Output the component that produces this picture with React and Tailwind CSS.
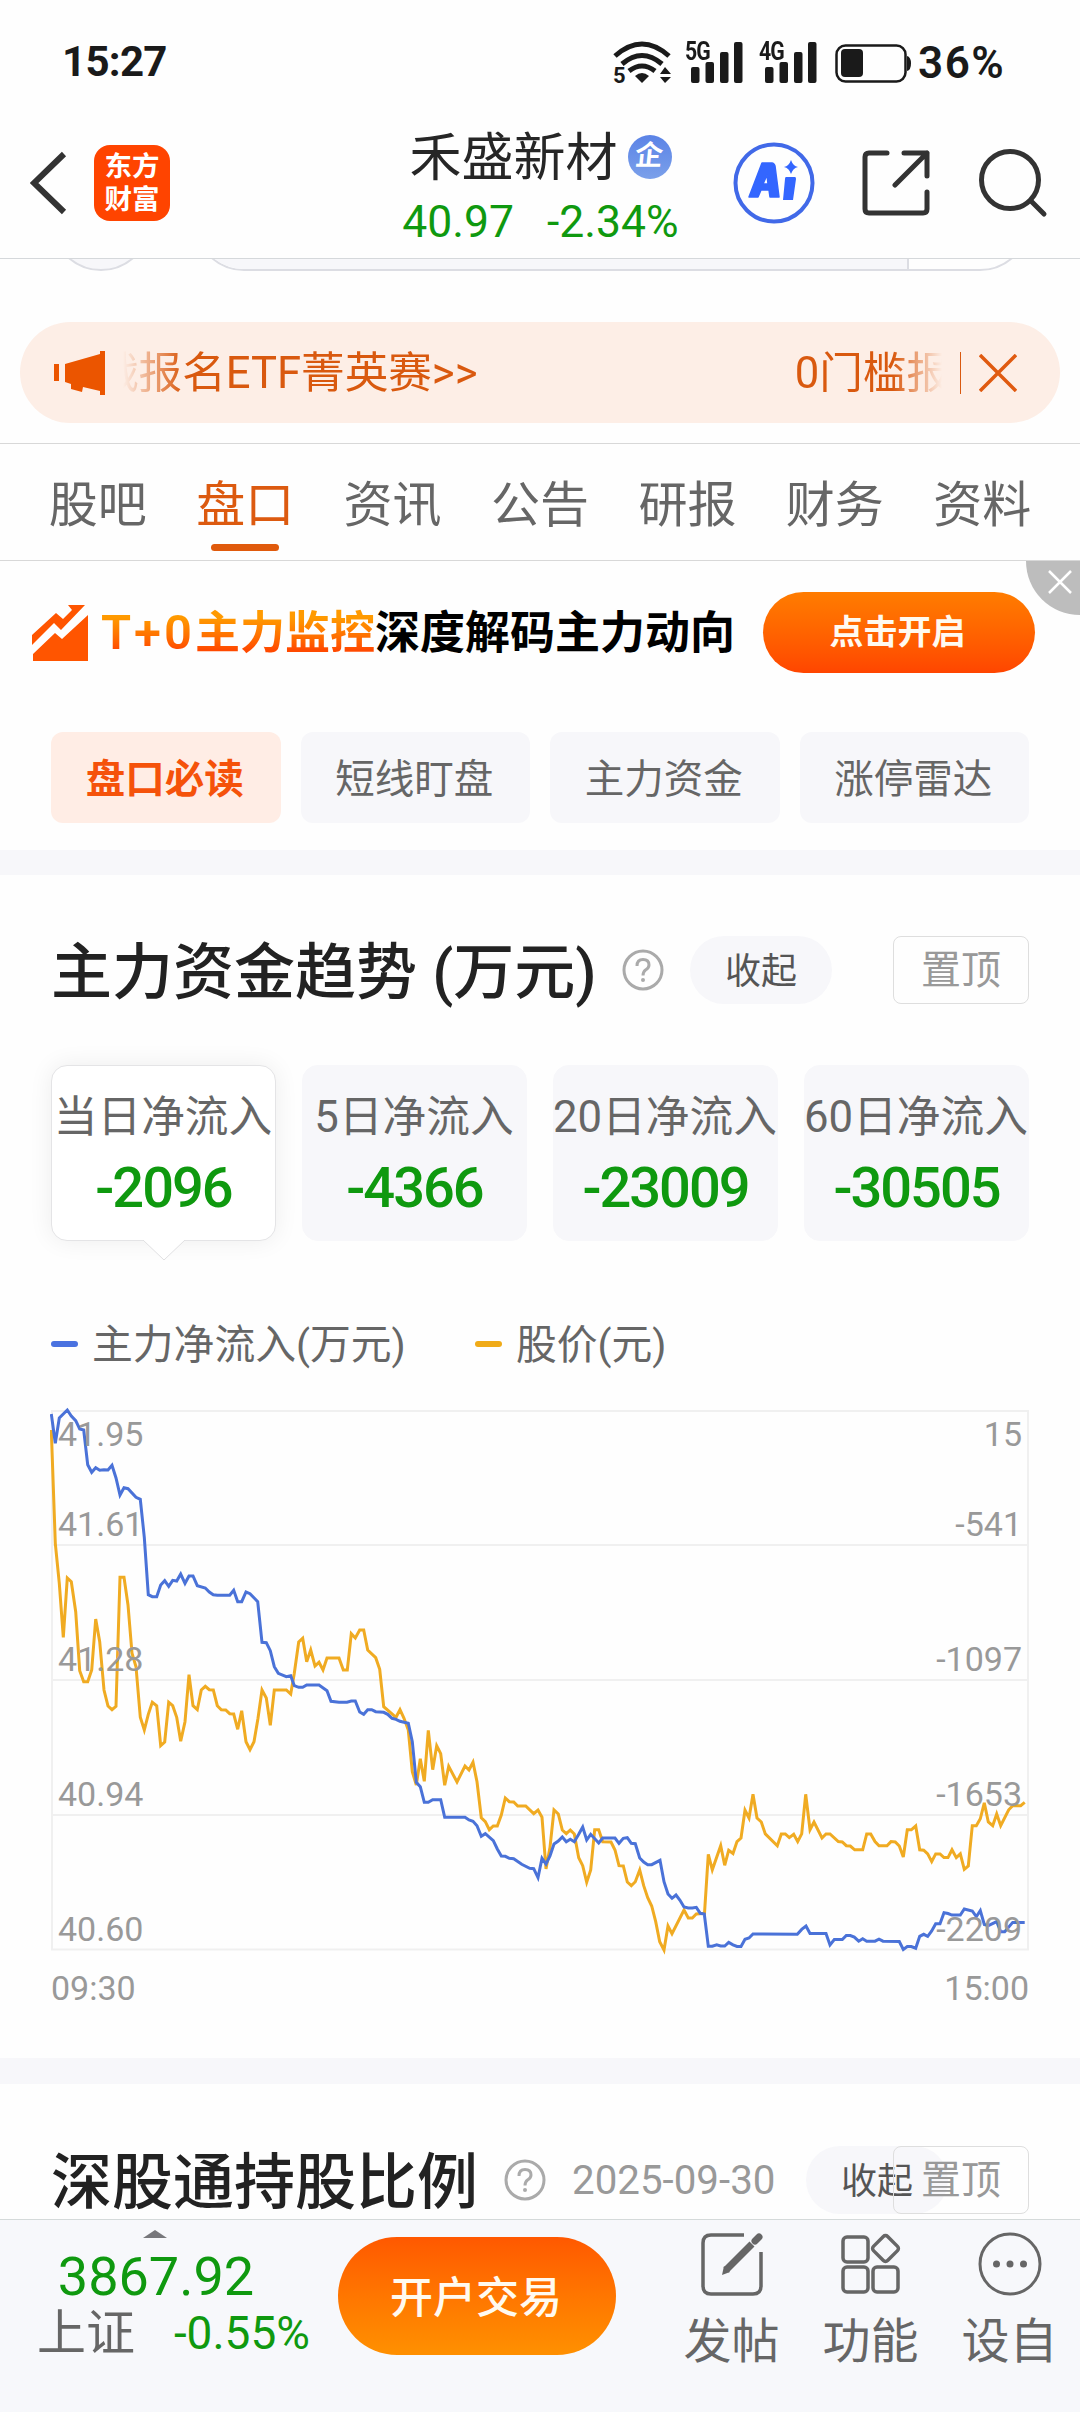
import clsx from 'clsx';

const FLOW = '1.3,14 5.3,43.3 9.3,18 17.3,10 21.3,16 25.7,20.7 29.7,29 33.7,30 37.7,64.7 41.7,72.3 45.7,67.7 49.7,70.3 54,69.7 58,70 62,65.3 66,78 70,95 74,87.7 78,88.7 86,97.3 90.3,99.3 94.3,137.3 98.3,194.7 102.3,196.7 106.7,196.7 110.7,185 114.7,180.7 118.7,186.3 122.7,180.3 126.7,181 130.7,174 135,183.3 139,176 143,176 147.3,185.7 155.3,188 159.3,192 163.3,194.7 167.3,195.3 179.7,195.3 183.7,190.3 187.7,201.7 191.7,201.7 196,192 200,193.7 207.7,201.7 212,242.3 216.3,242.7 220.3,250.7 224.3,266.7 228.3,273.3 236.3,276.7 240.7,275.7 244.3,285.7 248.7,287.3 252.7,287.3 256.7,285 269,285 277,290.7 281,301.3 289,302.3 297,302.3 301.3,301 305.3,301 309.7,312 313.7,314.3 317.7,309.7 321.7,309.7 325.7,311.7 333.7,312.3 337.7,314.3 342,318.3 346,319.3 350,321.3 358.3,323.3 362.3,341.7 366.3,382.3 370.3,386.7 374.3,402.3 378.3,402.3 382.7,399.7 390.7,399.7 394.7,417.3 415,417.3 419,420 423,421.3 427,425.7 431.3,436.3 435.3,433.7 443.3,440.7 447.3,449 451.3,456 455.3,456.3 459.3,458.3 463.7,458.7 471.7,464.3 479.7,468.3 483.7,468.7 488,477.7 492,458.3 496,464 500,456 504,444 508.3,441 512.3,437 516.3,441.7 520.3,439.3 524.3,441.7 528.7,434.3 532.7,427 536.7,440 540.7,434.3 548.7,443 552.7,438 565,438 569,443.3 573.3,438.3 577.3,437.7 581.3,443.3 585.3,443.7 589.7,458 593.7,462 597.7,464.7 601.7,464.7 610,460.3 614,481.7 618,494 622,498.3 626,495 630,500.3 634,507 638.3,508 642.3,508 646.3,507.3 650.3,513.3 654.3,514 658.3,546.2 662.3,546.2 666.7,544.8 670.7,546 674.7,546 678.7,542.4 683,544.9 687,546.5 691,546.5 695,539.2 699,538 703,533.9 747.3,534.3 751.7,529.4 756,526.1 760,533.5 776,533.5 780,544.9 784.3,539.6 792.3,539.6 796.3,535.5 800.3,535.5 804.3,537.1 808.7,541.2 812.7,538.8 816.7,541.2 825,541.2 829,539.2 833,541.2 849.3,541.6 853.3,549.4 857.3,546.5 861.3,546.5 865.7,548.2 869.7,536.3 873.7,534.3 877.7,536.3 881.7,531 885.7,523.7 890,523.7 894,512.7 898,513.5 902,515.1 910.3,515.1 914.3,509 922.3,511 926.3,516.7 930.3,510.6 934.3,524.5 938.3,525.7 946.7,521.6 950.7,531.8 954.7,531.8 962.7,522.4 974.7,522.4';

const PRICE = '1.3,30 5.3,143.3 9.3,183.3 13.3,237.3 17.3,178 21.3,181.7 25.7,211.7 29.7,270.7 33.7,281.7 37.7,281.7 41.7,270 45.7,219 49.7,241.7 54,290 58,306 62,309.7 66,306.3 70,177.3 74,177.3 78,205 82,253.3 86,266.7 90.3,317.3 94.3,330 98.3,314.3 102.3,302.3 106.7,305.7 110.7,345.7 114.7,342 118.7,302.3 122.7,305.7 126.7,317.3 130.7,341.3 135,321.7 139,274.7 143,305.7 147.3,309.7 151.3,290 155.3,286.3 159.3,289.7 163.3,290 167.3,305.7 171.3,309.7 175.7,310 179.7,313.7 183.7,314 187.7,329.3 191.7,310.7 196,341.7 200,349.7 204,341.7 208,318.3 212,290 216.3,298 220.3,325.3 224.3,290 236.3,290 240.7,294 244.3,273.3 248.7,242 252.7,238.3 256.7,261.7 260.7,250 265,266 269,262.3 273,270 277,258 289,258 293.3,270 297.3,270 301.3,233.7 305.3,238 309.7,230 313.7,230 317.7,250 325.7,257.7 329.7,269.3 333.7,306.7 346,317.3 350,309.7 354,318.3 358.3,330 362.3,371.7 366.3,385 370.3,358.7 374.3,381.3 378.3,330.3 382.7,369.7 386.7,345.7 390.7,353.7 394.7,385.3 398.7,366.3 407,382 415,366 419,370 423,362.3 427,381.7 431.3,417.7 435.3,421.7 439.3,429.7 443.3,426 447.3,426 451.3,415 455.3,398 459.3,401.7 463.7,402 467.7,406 475.7,406 483.7,413.7 488,410 492,417.3 496,469 500,447.3 504,410 508.3,414 512.3,430 516.3,433.7 520.3,430 524.3,434 528.7,457.7 532.7,465.7 536.7,482.3 540.7,470 544.7,429.7 548.7,429.7 552.7,441.7 561,442 565,450 569,465.7 573.3,466 577.3,482 581.3,485.7 585.3,481.7 589.7,470 593.7,485.7 597.7,497.7 601.7,506 605.7,521.7 609.7,541.7 614,550 618,526 622,533.7 634,510 638.3,518 642.3,518 646.3,514 654.5,513.3 658.3,454.3 662.3,469.8 670.7,445.7 674.7,465.3 678.7,450.2 683,453.5 687,441.6 691,438 695,410.2 699,418 703,394.3 707,418 711.3,422 715.3,433.9 727.3,445.7 731.3,433.9 735.3,433.9 739.3,437.6 743.7,434.3 747.7,441.6 751.7,433.9 755.7,394.3 760,429.8 764,422 772,438 776,433.9 780,433.9 788.3,441.6 792.3,442 796.3,445.7 800.3,446 804.7,449.8 812.7,449.8 816.7,433.9 820.7,433.9 825,441.6 829,445.7 837,445.7 841,441.6 845.3,442 849.3,446 853.3,457 857.3,429.8 861.3,429.8 865.7,426 869.7,449.8 873.7,450.2 877.7,453.9 881.7,461.6 885.7,453.9 890,453.9 894,457.6 898,457.6 902,449.8 906.3,457.6 910.3,453.9 914.3,469.4 918.3,466 922.3,425.7 926.3,425.7 930.3,418.8 934.3,402.9 938.3,422 942.7,425.7 946.7,413.9 950.7,425.7 958.7,409.8 962.7,405.7 970.7,405.7 974.7,402.4';

const tabs = ['股吧', '盘口', '资讯', '公告', '研报', '财务', '资料'];
const chips = ['盘口必读', '短线盯盘', '主力资金', '涨停雷达'];
const cards = [
  { label: '当日净流入', value: '-2096' },
  { label: '5日净流入', value: '-4366' },
  { label: '20日净流入', value: '-23009' },
  { label: '60日净流入', value: '-30505' },
];
const axis = [
  { y: 46, left: '41.95', right: '15' },
  { y: 136, left: '41.61', right: '-541' },
  { y: 271, left: '41.28', right: '-1097' },
  { y: 406, left: '40.94', right: '-1653' },
  { y: 541, left: '40.60', right: '-2209' },
];

function Signal({ label }) {
  return (
    <div className="relative w-[58px] h-[44px]">
      <span className="absolute left-0 -top-[4px] text-[25px] leading-[30px] font-bold tracking-[-1px] origin-left scale-x-85">{label}</span>
      <svg width="58" height="44" viewBox="0 0 58 44" fill="#1a1a1a">
        <rect x="6" y="26" width="8.500" height="16" rx="2" />
        <rect x="20.500" y="21" width="8.500" height="21" rx="2" />
        <rect x="35" y="11" width="8.500" height="31" rx="2" />
        <rect x="49" y="1" width="8.500" height="41" rx="2" />
      </svg>
    </div>
  );
}

function StatusBar() {
  return (
    <div className="h-[110px] flex items-start pl-[62px] pr-[73px] pt-[41px] text-[#1a1a1a]">
      <span className="text-[42px] leading-[44px] font-bold tracking-[-0.700px] -mt-px">15:27</span>
      <div className="ml-auto flex items-start">
        <div className="relative w-[58px] h-[44px]">
          <svg width="58" height="44" viewBox="0 0 58 44" fill="none" stroke="#1a1a1a" strokeWidth="5">
            <path d="M2 15 Q29 -9 56 15" />
            <path d="M9 23 Q29 6 49 23" />
            <path d="M16 30 Q29 20 42 30" />
            <path d="M22 35 Q29 29 36 35 L29 42 Z" fill="#1a1a1a" stroke="none" />
            <path d="M47 33 L52 26 L58 33 Z M47 36 L52 42 L58 36 Z" fill="#1a1a1a" stroke="none" />
          </svg>
          <span className="absolute left-0 top-[23px] text-[22px] leading-[24px] font-bold">5</span>
        </div>
        <div className="ml-[14px]"><Signal label="5G" /></div>
        <div className="ml-[16px]"><Signal label="4G" /></div>
        <svg className="ml-[18px] mt-[2px]" width="77" height="42" viewBox="0 0 77 42">
          <rect x="1.500" y="2.500" width="69" height="36" rx="9" fill="none" stroke="#1a1a1a" strokeWidth="2.500" />
          <rect x="6" y="6" width="22" height="28" rx="4" fill="#1a1a1a" />
          <path d="M72 13 q4 1 4 7.500 t-4 7.500 z" fill="#1a1a1a" />
        </svg>
        <span className="ml-[6px] w-[89px] text-[44px] leading-[44px] font-semibold tracking-[1.500px]">36%</span>
      </div>
    </div>
  );
}

function NavBar() {
  return (
    <div className="h-[149px] flex items-start border-b border-[#d5d8db] text-[#262626]">
      <svg className="ml-[30px] mt-[40px]" width="38" height="66" viewBox="0 0 38 66" fill="none" stroke="#333" strokeWidth="6">
        <path d="M34 4 L4 33 L34 62" />
      </svg>
      <div className="ml-[26px] mt-[35px] w-[76px] h-[76px] rounded-2xl bg-[#ff4400] text-white text-[27.500px] leading-[33px] font-bold text-center pt-[5px]">
        东方<br />财富
      </div>
      <div className="ml-[225px] mt-[21px] w-[294px] flex flex-col items-center">
        <div className="flex items-center -ml-[3px]">
          <span className="text-[52px] leading-[52px] pt-[2px] -mb-[2px]">禾盛新材</span>
          <span className="ml-[10px] w-[44px] h-[44px] rounded-full bg-linear-to-b from-[#5b83e6] to-[#7ba0ea] text-white text-[28px] leading-[42px] font-bold text-center">
            <span className="inline-block -skew-x-6">企</span>
          </span>
        </div>
        <div className="mt-[14px] -ml-[3px] flex gap-[33px] text-[44.500px] leading-[50px] text-[#0f990f]">
          <span>40.97</span>
          <span>-2.34%</span>
        </div>
      </div>
      <svg className="ml-[44px] mt-[32px]" width="82" height="82" viewBox="0 0 82 82">
        <circle cx="41" cy="41" r="38.500" fill="none" stroke="#4169e8" strokeWidth="4" />
        <path fillRule="evenodd" fill="#3366ff" stroke="#3366ff" strokeWidth="1.500" strokeLinejoin="round" d="M29 21 H39 Q41 21 42 24 L46 55 H37 L36 48 H28 L25 55 H16 Z M34 33 L30 42 H35 Z" />
        <path fill="#3366ff" d="M53 35 H62 Q63 35 63 37 L60 58 H50 L52 37 Q52 35 53 35 Z M58 18 Q60 24 65 25 Q60 26 58 32 Q56 26 51 25 Q56 24 58 18 Z" />
      </svg>
      <svg className="ml-[47px] mt-[39px]" width="68" height="68" viewBox="0 0 68 68" fill="none" stroke="#333" strokeWidth="5" strokeLinecap="round" strokeLinejoin="round">
        <path d="M25 4 H7 Q3 4 3 8 V60 Q3 64 7 64 H61 Q65 64 65 60 V43" />
        <path d="M42 4 H65 V27 M65 4 L33 36" />
      </svg>
      <svg className="ml-[49px] mt-[37px]" width="70" height="72" viewBox="0 0 70 72" fill="none" stroke="#333" strokeWidth="5" strokeLinecap="round">
        <circle cx="31" cy="33" r="28.500" />
        <path d="M52 54 L65 67" />
      </svg>
    </div>
  );
}

// bottom edge of the row that has scrolled under the header
function ScrolledRow() {
  return (
    <div className="h-[12px] overflow-hidden flex items-end">
      <div className="ml-[51px] w-[100px] h-[100px] shrink-0 rounded-full bg-[#f7f7fa] border-2 border-[#dcdde3]" />
      <div className="ml-[43px] w-[836px] h-[100px] shrink-0 rounded-full border-2 border-[#dcdde3] overflow-hidden flex">
        <div className="w-[713px] bg-[#f7f7fa] border-r-2 border-[#dcdde3]" />
      </div>
    </div>
  );
}

function Notice() {
  return (
    <div className="mt-[51px] mx-5 h-[101px] rounded-full bg-[#fdeee6] flex items-center text-[#d9590f]">
      <svg className="ml-[34px] shrink-0" width="52" height="46" viewBox="0 0 52 46" fill="#eb5500">
        <path d="M0 14 h5 v17 H0 Z M11 14 L46 4 V1 H51 V45 H46 V41 L29 37 L28 42 L17 39 V34 L11 32 Z" />
      </svg>
      <div className="ml-[17px] mt-[2px] w-[819px] overflow-hidden flex justify-between whitespace-nowrap text-[43.600px] leading-[60px] [mask-image:linear-gradient(to_right,transparent,black_60px,black_770px,transparent)]">
        <span className="-ml-[28px]">战报名ETF菁英赛&gt;&gt;</span>
        <span className="-mr-[8px]">0门槛报</span>
      </div>
      <div className="ml-[18px] w-px h-[42px] bg-[#d9590f]" />
      <svg className="ml-[18px]" width="38" height="38" viewBox="0 0 38 38" stroke="#e05a10" strokeWidth="3.500">
        <path d="M1 1 L37 37 M37 1 L1 37" />
      </svg>
    </div>
  );
}

function TabBar() {
  return (
    <div className="mt-[20px] h-[118px] border-y border-[#d8d8d8] px-[24px] flex">
      {tabs.map((t, i) => (
        <div key={t} className={clsx('flex-1 flex flex-col items-center', i === 1 ? 'text-[#dc5a10]' : 'text-[#666]')}>
          <span className="mt-[32px] text-[49px] leading-[60px]">{t}</span>
          {i === 1 && <span className="mt-[8px] w-[68px] h-[7px] rounded-full bg-[#e05a0c]" />}
        </div>
      ))}
    </div>
  );
}

function PromoBanner() {
  return (
    <div className="relative h-[142px] flex items-center pl-[32px]">
      <svg width="57" height="57" viewBox="0 0 57 57" fill="#ff5500">
        <path d="M0 31 L24 9 L31 15 L40 6 L36 1 L53 1 L29 26 L22 19 L0 41 Z" />
        <path d="M1 57 V50 L23 29 L30 35 L56 11 V57 Z" />
      </svg>
      <span className="ml-[12px] mt-[3px] whitespace-nowrap text-[45px] leading-[60px] font-bold text-black">
        <span className="bg-linear-to-b from-[#ff9a00] from-20% to-[#ff4a00] to-80% bg-clip-text text-transparent"><span className="text-[49px] font-semibold tracking-[3px]">T+0</span>主力监控</span>深度解码主力动向
      </span>
      <button className="absolute left-[763px] top-[31px] w-[272px] h-[81px] rounded-full bg-linear-to-b from-[#ff7c00] to-[#ff4500] text-[#fffaf0] text-[34px] font-bold pr-[3px]">点击开启</button>
      <div className="absolute right-0 top-0 w-[54px] h-[54px] rounded-bl-full bg-[#bdbdbd]">
        <svg className="mt-[9px] ml-[22px]" width="24" height="24" viewBox="0 0 24 24" stroke="#fff" strokeWidth="2.500">
          <path d="M1 1 L23 23 M23 1 L1 23" />
        </svg>
      </div>
    </div>
  );
}

function Help() {
  return (
    <svg className="shrink-0" width="42" height="42" viewBox="0 0 42 42" fill="none" stroke="#aaa" strokeWidth="3">
      <circle cx="21" cy="21" r="19" />
      <path d="M15 17 Q15 10.500 21 10.500 Q27 10.500 27 16 Q27 19 23.500 21 Q21 23 21 26.500" />
      <circle cx="21" cy="31" r="2" fill="#aaa" stroke="none" />
    </svg>
  );
}

function FoldButton({ className }) {
  return <button className={clsx('shrink-0 w-[142px] h-[68px] rounded-full bg-[#f7f7fa] text-[#555] text-[36px] leading-[68px] pt-[3px] flex items-center justify-center', className)}>收起</button>;
}

function PinButton({ className }) {
  return <button className={clsx('shrink-0 w-[136px] h-[68px] rounded-lg border border-[#dedede] text-[#999] text-[40px] leading-[66px] pt-[2px] flex items-center justify-center', className)}>置顶</button>;
}

function FundCard({ label, value, active }) {
  return (
    <div className={clsx('relative w-[225px] h-[176px] rounded-2xl flex flex-col items-center whitespace-nowrap', active ? 'bg-white border border-[#e4e4e6] shadow-[0_0_24px_rgba(0,0,0,0.07)]' : 'bg-[#f7f7fa] border border-[#f7f7fa]')}>
      <span className="mt-[21px] -ml-px text-[43.700px] leading-[60px] text-[#666]">{label}</span>
      <span className="mt-[11px] text-[56px] leading-[60px] font-medium tracking-[-2px] text-[#0f990f]">{value}</span>
      {active && (
        <svg className="absolute left-[91px] -bottom-[21px]" width="42" height="21" viewBox="0 0 42 21">
          <path d="M0 0 L21 20 L42 0" fill="#fff" stroke="#e0e0e2" strokeWidth="1" />
        </svg>
      )}
    </div>
  );
}

function FundChart() {
  return (
    <svg className="block ml-[50px] mt-[26px]" width="980" height="620" viewBox="0 0 980 620" fill="none">
      <path d="M1 11 H979 M1 145 H979 M1 280 H979 M1 415 H979 M1 549.500 H979 M2 10 V550 M978 10 V550" stroke="#f0f0f0" strokeWidth="2" />
      <polyline points={PRICE} stroke="#f0ab22" strokeWidth="3" />
      <polyline points={FLOW} stroke="#4a72d8" strokeWidth="3" />
      <g fill="#999" fontFamily="Roboto" fontSize="34">
        {axis.map(a => (
          <g key={a.left}>
            <text x="8" y={a.y}>{a.left}</text>
            <text x="972" y={a.y} textAnchor="end">{a.right}</text>
          </g>
        ))}
        <text x="1" y="600">09:30</text>
        <text x="979" y="600" textAnchor="end">15:00</text>
      </g>
    </svg>
  );
}

function BottomItem({ label, children }) {
  return (
    <div className="w-[139px] flex flex-col items-center text-[#666]">
      <div className="h-[64px]">{children}</div>
      <span className="mt-[18px] text-[48px] leading-[56px]">{label}</span>
    </div>
  );
}

function BottomBar() {
  return (
    <div className="h-[193px] shrink-0 border-t border-[#d5dada] bg-[#f7f8fb] flex items-start">
      <div className="w-[312px] shrink-0 flex flex-col items-center">
        <svg className="mt-[10px] mr-[2px]" width="24" height="8" viewBox="0 0 24 8"><path d="M0 8 L12 0 L24 8 Z" fill="#77777b" /></svg>
        <span className="mt-[9px] text-[54px] leading-[60px] text-[#0f990f]">3867.92</span>
        <div className="pl-[37px] pr-[2px] w-full flex items-center leading-[52px]">
          <span className="text-[49px] text-[#666] pt-px">上证</span>
          <span className="ml-auto text-[46px] text-[#0f990f] -mt-[2px]">-0.55%</span>
        </div>
      </div>
      <button className="ml-[26px] mt-[17px] w-[278px] h-[118px] shrink-0 rounded-full bg-linear-to-b from-[#ff5800] to-[#ff9000] text-[#fffaf0] text-[43px] font-medium pt-[5px] pr-[2px]">开户交易</button>
      <div className="ml-[46px] mt-[12px] flex">
        <BottomItem label="发帖">
          <svg width="62" height="64" viewBox="0 0 62 64" fill="none" stroke="#666" strokeWidth="3.500">
            <path d="M43 3 H10 Q2 3 2 11 V54 Q2 62 10 62 H52 Q60 62 60 54 V20" />
            <path d="M51 12 L25 38" strokeWidth="7" />
            <path d="M21 43 L23 34 L29 40 Z" fill="#666" stroke="none" />
            <path d="M54 9 L58 5" strokeWidth="7" strokeLinecap="round" />
          </svg>
        </BottomItem>
        <BottomItem label="功能">
          <svg width="60" height="64" viewBox="0 0 60 64" fill="none" stroke="#666" strokeWidth="3.500">
            <rect x="2" y="5" width="25" height="25" rx="4" />
            <rect x="2" y="35" width="25" height="25" rx="4" />
            <rect x="32" y="35" width="25" height="25" rx="4" />
            <rect x="34.500" y="6.500" width="20" height="20" rx="3" transform="rotate(45 44.500 16.500)" />
          </svg>
        </BottomItem>
        <BottomItem label="设自">
          <svg width="64" height="64" viewBox="0 0 64 64">
            <circle cx="32" cy="32" r="30" fill="none" stroke="#666" strokeWidth="3" />
            <g fill="#666"><circle cx="18.500" cy="32" r="3.500" /><circle cx="32" cy="32" r="3.500" /><circle cx="45.500" cy="32" r="3.500" /></g>
          </svg>
        </BottomItem>
      </div>
    </div>
  );
}

export default function App() {
  return (
    <div className="w-[1080px] h-[2412px] flex flex-col overflow-hidden bg-[#fefefe] font-['Roboto','Noto_Sans_CJK_SC',sans-serif]">
      <div className="flex-1 min-h-0 overflow-hidden">
        <StatusBar />
        <NavBar />
        <ScrolledRow />
        <Notice />
        <TabBar />
        <PromoBanner />

        <div className="mt-[29px] px-[51px] grid grid-cols-4 gap-5">
          {chips.map((c, i) => (
            <div key={c} className={clsx('h-[91px] rounded-xl pt-[3px] pr-[2px] text-[39.500px] leading-[90px] text-center', i === 0 ? 'bg-[#ffede5] text-[#f5520a] font-bold' : 'bg-[#f7f7fa] text-[#666]')}>{c}</div>
          ))}
        </div>
        <div className="mt-[27px] h-[25px] bg-[#f7f7fa]" />

        <div className="mt-[61px] h-[68px] px-[51px] flex items-center">
          <h2 className="mt-[6px] text-[61px] leading-[68px] font-medium text-[#222] whitespace-nowrap w-[571px]">主力资金趋势 (万元)</h2>
          <Help />
          <FoldButton className="ml-[26px]" />
          <PinButton className="ml-auto" />
        </div>

        <div className="mt-[61px] px-[51px] flex justify-between">
          {cards.map((c, i) => <FundCard key={c.label} {...c} active={i === 0} />)}
        </div>

        <div className="mt-[73px] pl-[51px] h-[60px] flex items-center text-[40.800px] leading-[60px] text-[#666]">
          <span className="w-[27px] h-[6px] rounded-full bg-[#4a72e0]" />
          <span className="ml-[14px] mt-[2px] w-[383px]">主力净流入(万元)</span>
          <span className="w-[27px] h-[6px] rounded-full bg-[#f0ab18]" />
          <span className="ml-[14px] mt-[2px]">股价(元)</span>
        </div>
        <FundChart />

        <div className="mt-[38px] h-[26px] bg-[#f7f7fa]" />
        <div className="mt-[62px] h-[68px] pl-[51px] flex items-center">
          <h2 className="mt-[6px] text-[61px] leading-[68px] font-medium text-[#222] whitespace-nowrap w-[453px]">深股通持股比例</h2>
          <Help />
          <span className="ml-[26px] mt-[3px] w-[234px] text-[40.300px] text-[#999]">2025-09-30</span>
          <FoldButton />
          <PinButton className="-ml-[55px]" />
        </div>
      </div>
      <BottomBar />
    </div>
  );
}
